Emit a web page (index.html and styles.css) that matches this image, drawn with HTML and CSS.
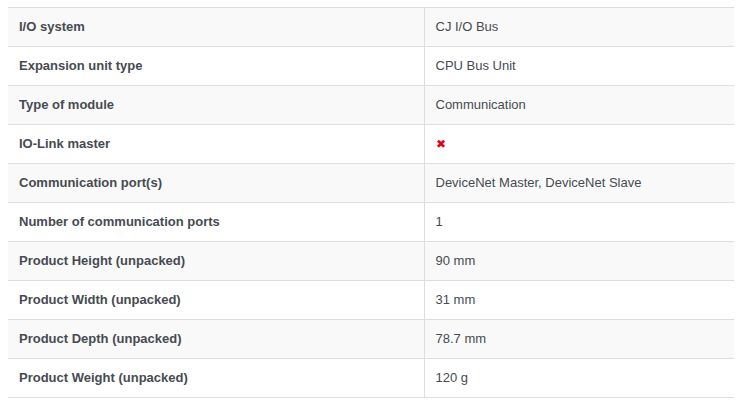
FILE: index.html
```html
<!DOCTYPE html>
<html>
<head>
<meta charset="utf-8">
<link rel="stylesheet" href="styles.css">
</head>
<body>
<table class="specs">
<tbody>
<tr><th>I/O system</th><td>CJ I/O Bus</td></tr>
<tr><th>Expansion unit type</th><td>CPU Bus Unit</td></tr>
<tr><th>Type of module</th><td>Communication</td></tr>
<tr><th>IO-Link master</th><td><span class="no">✖</span></td></tr>
<tr><th>Communication port(s)</th><td>DeviceNet Master, DeviceNet Slave</td></tr>
<tr><th>Number of communication ports</th><td>1</td></tr>
<tr><th>Product Height (unpacked)</th><td>90 mm</td></tr>
<tr><th>Product Width (unpacked)</th><td>31 mm</td></tr>
<tr><th>Product Depth (unpacked)</th><td>78.7 mm</td></tr>
<tr><th>Product Weight (unpacked)</th><td>120 g</td></tr>
</tbody>
</table>
</body>
</html>
```
FILE: styles.css
```css
html, body {
  margin: 0;
  padding: 0;
  background: #fff;
}
body {
  padding: 7px 8px 0 8px;
  font-family: "Liberation Sans", Arial, sans-serif;
  font-size: 13px;
  color: #464b51;
}
.specs {
  width: 726px;
  border-collapse: collapse;
  table-layout: fixed;
}
.specs tr {
  border-top: 1px solid #ddd;
  border-bottom: 1px solid #ddd;
}
.specs tr:nth-child(odd) {
  background: #f9f9f9;
}
.specs th, .specs td {
  height: 39px;
  padding: 0 11px;
  text-align: left;
  vertical-align: middle;
  line-height: 16px;
  box-sizing: border-box;
}
.specs th {
  width: 416px;
  font-weight: bold;
  border-right: 1px solid #ddd;
}
.specs td {
  font-weight: normal;
}
.no {
  color: #e1001a;
  font-size: 12px;
}
```
